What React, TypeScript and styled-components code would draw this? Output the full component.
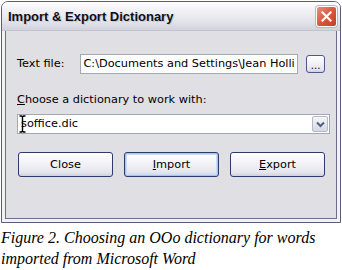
import React from 'react';
import styled, {createGlobalStyle} from 'styled-components';

const Global = createGlobalStyle`
  html, body { margin: 0; padding: 0; background: #ffffff; }
  body { width: 342px; height: 270px; overflow: hidden; }
`;

const Page = styled.div`
  padding: 1px 1px 0 1px;
  font-family: "DejaVu Sans", "Liberation Sans", sans-serif;
`;

const Window = styled.div`
  width: 340px;
  height: 222px;
  box-sizing: border-box;
  border: 1px solid #5c5c78;
  border-radius: 7px 7px 0 0;
  background: #f2f2f6;
  display: flex;
  flex-direction: column;
`;

const TitleBar = styled.div`
  height: 28px;
  flex: none;
  display: flex;
  align-items: center;
  justify-content: space-between;
  padding: 0 3px 0 6px;
  border-radius: 6px 6px 0 0;
  background: linear-gradient(#ffffff 0%, #f1f1f5 30%, #e3e3ea 70%, #d2d2dc 100%);
  border-bottom: 1px solid #c4c4d0;
`;

const Title = styled.span`
  font-family: "Liberation Sans", Arial, sans-serif;
  font-weight: bold;
  font-size: 13px;
  color: #101018;
  text-shadow: 1px 1px 0 #c8c8d2;
`;

const CloseButton = styled.div`
  width: 21px;
  height: 21px;
  box-sizing: border-box;
  border: 1px solid #ffffff;
  border-radius: 3px;
  background: linear-gradient(135deg, #e8917a 0%, #d65a3e 50%, #c2401f 100%);
  box-shadow: 0 0 0 1px #b8b8c4;
  display: flex;
  align-items: center;
  justify-content: center;
`;

const Body = styled.div`
  flex: 1;
  margin: 0 3px 3px 3px;
  border: 1px solid #6e6e88;
  border-top: none;
  background: #e0dfe3;
  padding: 23px 11px 0 11px;
  display: flex;
  flex-direction: column;
  font-size: 11.3px;
  color: #000000;
`;

const FileRow = styled.div`
  display: flex;
  align-items: center;
  height: 20px;
`;

const Label = styled.div<{mt?: number}>`
  line-height: 14px;
  margin-top: ${p => p.mt ?? 0}px;
  white-space: nowrap;
`;

const TextInput = styled.div`
  margin-left: 16px;
  width: 220px;
  height: 20px;
  box-sizing: border-box;
  border: 1px solid #a4a8b4;
  background: #ffffff;
  padding: 0 2px;
  line-height: 18px;
  overflow: hidden;
  white-space: nowrap;
`;

const XpButton = styled.div<{focused?: boolean}>`
  box-sizing: border-box;
  border: 1px solid #2b3b6a;
  border-radius: 3px;
  background: linear-gradient(#ffffff 0%, #f4f4f8 40%, #e4e4ec 85%, #cfd0dc 100%);
  display: flex;
  align-items: center;
  justify-content: center;
  box-shadow: ${p => (p.focused ? 'inset 0 0 0 1px #a9c4f0, inset 0 0 0 2px #c8dbf8' : 'none')};
`;

const BrowseButton = styled(XpButton)`
  width: 19px;
  height: 18px;
  margin-left: 8px;
  font-size: 10px;
  line-height: 10px;
  padding-top: 3px;
  border-color: #4a5a88;
`;

const Combo = styled.div`
  position: relative;
  margin-top: 7px;
  width: 313px;
  height: 20px;
  box-sizing: border-box;
  border: 1px solid #a4a8b4;
  background: #ffffff;
  display: flex;
  align-items: center;
  justify-content: space-between;
  padding: 0 1px 0 3px;
`;

const ComboText = styled.span`
  line-height: 16px;
`;

const DropButton = styled.div`
  width: 16px;
  height: 16px;
  box-sizing: border-box;
  border: 1px solid #b4b8c8;
  border-radius: 2px;
  background: linear-gradient(#f6f6fa, #d6d8e2);
  display: flex;
  align-items: center;
  justify-content: center;
`;

const IBeam = styled.svg`
  position: absolute;
  left: 1px;
  top: 0px;
`;

const ButtonRow = styled.div`
  margin-top: 18px;
  margin-left: 1px;
  display: flex;
  gap: 11px;
`;

const ActionButton = styled(XpButton)`
  width: 95px;
  height: 25px;
`;

const Caption = styled.div`
  margin-top: 4px;
  font-family: "Liberation Serif", "Times New Roman", serif;
  font-style: italic;
  font-size: 16px;
  line-height: 21px;
  color: #000000;
`;

export default function App() {
  return (
    <>
      <Global />
      <Page>
        <Window>
          <TitleBar>
            <Title>Import &amp; Export Dictionary</Title>
            <CloseButton>
              <svg width="11" height="11" viewBox="0 0 11 11">
                <path d="M1.5 1.5 L9.5 9.5 M9.5 1.5 L1.5 9.5" stroke="#ffffff" strokeWidth="2.2" strokeLinecap="square" />
              </svg>
            </CloseButton>
          </TitleBar>
          <Body>
            <FileRow>
              <Label>Text file:</Label>
              <TextInput>C:\Documents and Settings\Jean Holli</TextInput>
              <BrowseButton>...</BrowseButton>
            </FileRow>
            <Label mt={19}><u>C</u>hoose a dictionary to work with:</Label>
            <Combo>
              <ComboText>soffice.dic</ComboText>
              <DropButton>
                <svg width="9" height="7" viewBox="0 0 9 7">
                  <path d="M1 1.5 L4.5 5 L8 1.5" fill="none" stroke="#4d6185" strokeWidth="2" />
                </svg>
              </DropButton>
              <IBeam width="7" height="18" viewBox="0 0 7 18">
                <path d="M0.5 1 H2.5 L3.5 2 L4.5 1 H6.5 M3.5 2 V16 M0.5 17 H2.5 L3.5 16 L4.5 17 H6.5" fill="none" stroke="#000000" strokeWidth="1.4" />
              </IBeam>
            </Combo>
            <ButtonRow>
              <ActionButton>Close</ActionButton>
              <ActionButton focused><span><u>I</u>mport</span></ActionButton>
              <ActionButton><span><u>E</u>xport</span></ActionButton>
            </ButtonRow>
          </Body>
        </Window>
        <Caption>
          Figure 2. Choosing an OOo dictionary for words
          <br />
          imported from Microsoft Word
        </Caption>
      </Page>
    </>
  );
}
